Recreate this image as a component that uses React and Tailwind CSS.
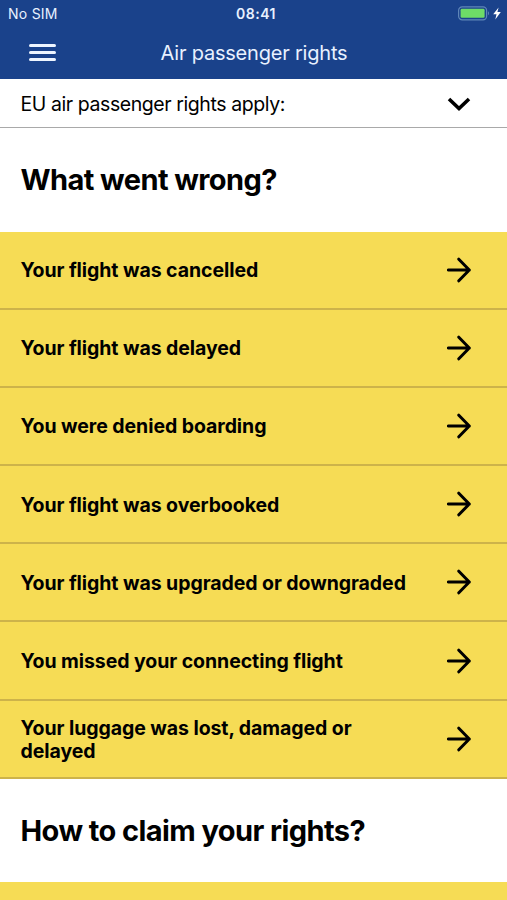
const problems = [
  "Your flight was cancelled",
  "Your flight was delayed",
  "You were denied boarding",
  "Your flight was overbooked",
  "Your flight was upgraded or downgraded",
  "You missed your connecting flight",
  "Your luggage was lost, damaged or delayed",
];

function BatteryIcon() {
  return (
    <svg className="w-[45px] h-4" viewBox="0 0 45 16" fill="none">
      <rect x="0.6" y="0.8" width="28" height="13" rx="3.6" stroke="#5f86b8" strokeWidth="1.2" />
      <rect x="2.6" y="2.8" width="24" height="9" rx="1.4" fill="#6edb67" />
      <path d="M30 5.3v4c1.3-.5 1.3-3.5 0-4z" fill="#5f86b8" />
      <path d="M40.6 1.5L35.2 8.2h3.3l-1.2 5.3 5.5-7.4h-3.4z" fill="#fff" />
    </svg>
  );
}

function ArrowIcon() {
  return (
    <svg
      className="w-6 h-[26px] shrink-0"
      viewBox="0 0 24 26"
      fill="none"
      stroke="#000"
      strokeWidth="3"
      strokeLinecap="round"
      strokeLinejoin="round"
    >
      <path d="M1.4 13H22.3M11.8 2.2L22.3 13L11.8 23.8" />
    </svg>
  );
}

function SectionTitle({ children }) {
  return (
    <h2 className="h-[103.5px] flex items-center px-[20.5px] text-[29px] leading-none font-bold tracking-[-0.58px] whitespace-nowrap">
      {children}
    </h2>
  );
}

export default function App() {
  return (
    <div className="w-full h-[900px] overflow-hidden bg-white text-black font-['Inter','Liberation_Sans',sans-serif]">
      <header className="h-[79px] bg-[#1a428b] text-[#e8f1ff]">
        <div className="h-7 grid grid-cols-3 items-center pl-2 pr-1">
          <span className="text-[14px] leading-none tracking-[0.25px]">No SIM</span>
          <span className="pl-px text-[14px] leading-none font-semibold text-center tracking-[0.5px]">08:41</span>
          <span className="flex justify-end">
            <BatteryIcon />
          </span>
        </div>
        <div className="h-12 grid grid-cols-[100px_1fr_100px] items-center">
          <button className="ml-[29px] w-[27px] flex flex-col gap-1" aria-label="Menu">
            <span className="h-[3px] rounded-full bg-[#eef5ff]" />
            <span className="h-[3px] rounded-full bg-[#eef5ff]" />
            <span className="h-[3px] rounded-full bg-[#eef5ff]" />
          </button>
          <h1 className="pt-0.5 pl-px text-center text-[20px] leading-none tracking-[-0.2px] whitespace-nowrap">
            Air passenger rights
          </h1>
        </div>
      </header>

      <div className="h-[49px] flex items-center justify-between pl-[20.5px] pr-9 border-b border-[#a9a9a9]">
        <span className="pt-[3px] text-[19.5px] leading-none tracking-[-0.42px]">EU air passenger rights apply:</span>
        <svg className="w-6 h-4" viewBox="0 0 24 16" fill="none" stroke="#000" strokeWidth="3.6">
          <path d="M2 4L12 13.5L22 4" />
        </svg>
      </div>

      <SectionTitle>What went wrong?</SectionTitle>

      <ul className="bg-[#f6dc55]">
        {problems.map((problem) => (
          <li
            key={problem}
            className="h-[78.2px] flex items-center justify-between pl-[20.5px] pr-9 border-b-2 border-[#cdb34a]"
          >
            <span className="w-[390px] pt-0.5 text-[19.5px] leading-[23px] font-bold tracking-[-0.07px]">{problem}</span>
            <ArrowIcon />
          </li>
        ))}
      </ul>

      <SectionTitle>How to claim your rights?</SectionTitle>
      <div className="h-8 bg-[#f6dc55]" />
    </div>
  );
}
